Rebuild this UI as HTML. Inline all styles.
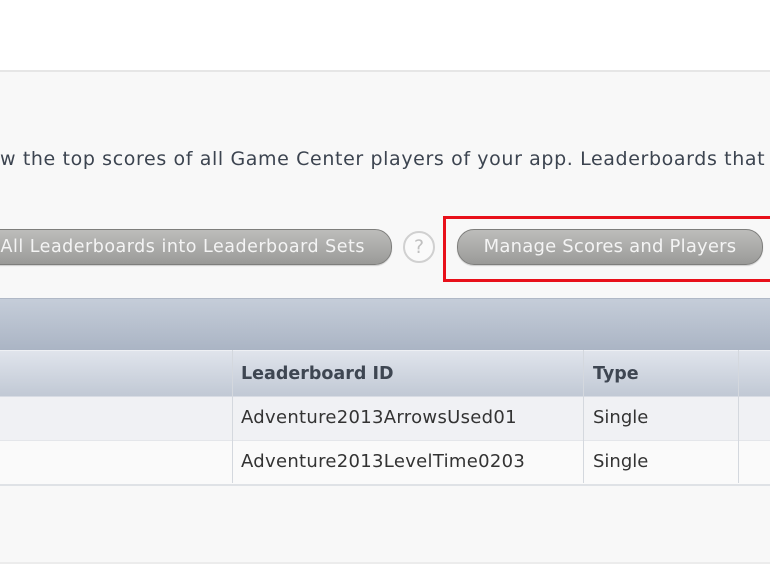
<!DOCTYPE html>
<html><head><style>
body{margin:0;width:770px;height:578px;overflow:hidden;background:#fff;font-family:"DejaVu Sans","Liberation Sans",sans-serif;position:relative}
.a{position:absolute}
#panel{left:0;top:70px;width:770px;height:490px;background:#f8f8f8;border-top:2px solid #e6e6e6;border-bottom:2px solid #ececec}
.btn{height:34px;border-radius:17px;background:linear-gradient(#bdbdbb,#9a9a98);border:1px solid #7e7e7c;box-shadow:0 1px 1px #ccc;color:#f4f4f4;font-size:17.5px;line-height:34px;white-space:nowrap;letter-spacing:0.2px}
.txt{color:#3c4450;white-space:nowrap}
</style></head><body>
<div class="a" id="panel"></div>
<div class="a txt" style="left:0;top:148px;font-size:19px;letter-spacing:0.62px">w the top scores of all Game Center players of your app. Leaderboards that</div>
<div class="a btn" style="left:-30px;top:229px;width:420px;text-align:right"><span style="margin-right:26px;letter-spacing:0.5px">All Leaderboards into Leaderboard Sets</span></div>
<div class="a" style="left:403px;top:231px;width:28px;height:28px;border-radius:50%;border:2px solid #d0d0d0;color:#c0c0c0;font-size:19px;line-height:28px;text-align:center;background:#fafafa">?</div>
<div class="a btn" style="left:457px;top:229px;width:304px;text-align:center;font-size:18px">Manage Scores and Players</div>
<div class="a" style="left:443px;top:216px;width:340px;height:60px;border:3px solid #e8101a"></div>
<div class="a" style="left:0;top:298px;width:770px;height:52px;background:linear-gradient(#c5cdd9,#aab4c4);border-top:1px solid #b0b8c6"></div>
<div class="a" style="left:0;top:350px;width:770px;height:46px;background:linear-gradient(#e0e4ec,#c0c8d4);border-top:1px solid #eef0f4"></div>
<div class="a" style="left:0;top:396px;width:770px;height:44px;background:#f0f1f4;border-top:1px solid #d8dce4"></div>
<div class="a" style="left:0;top:440px;width:770px;height:43px;background:#fafafa;border-top:1px solid #e4e6ea;border-bottom:2px solid #dfe2e6"></div>
<div class="a" style="left:232px;top:350px;width:1px;height:133px;background:#d4d8de"></div>
<div class="a" style="left:583px;top:350px;width:1px;height:133px;background:#d4d8de"></div>
<div class="a" style="left:738px;top:350px;width:1px;height:133px;background:#d4d8de"></div>
<div class="a txt" style="left:241px;top:364px;font-size:17.5px;font-weight:bold;color:#3e4652">Leaderboard ID</div>
<div class="a txt" style="left:593px;top:364px;font-size:17.5px;font-weight:bold;color:#3e4652">Type</div>
<div class="a txt" style="left:241px;top:407px;font-size:18px;letter-spacing:0.3px;color:#333">Adventure2013ArrowsUsed01</div>
<div class="a txt" style="left:593px;top:407px;font-size:18px;color:#333">Single</div>
<div class="a txt" style="left:241px;top:451px;font-size:18px;letter-spacing:0.3px;color:#333">Adventure2013LevelTime0203</div>
<div class="a txt" style="left:593px;top:451px;font-size:18px;color:#333">Single</div>
</body></html>
